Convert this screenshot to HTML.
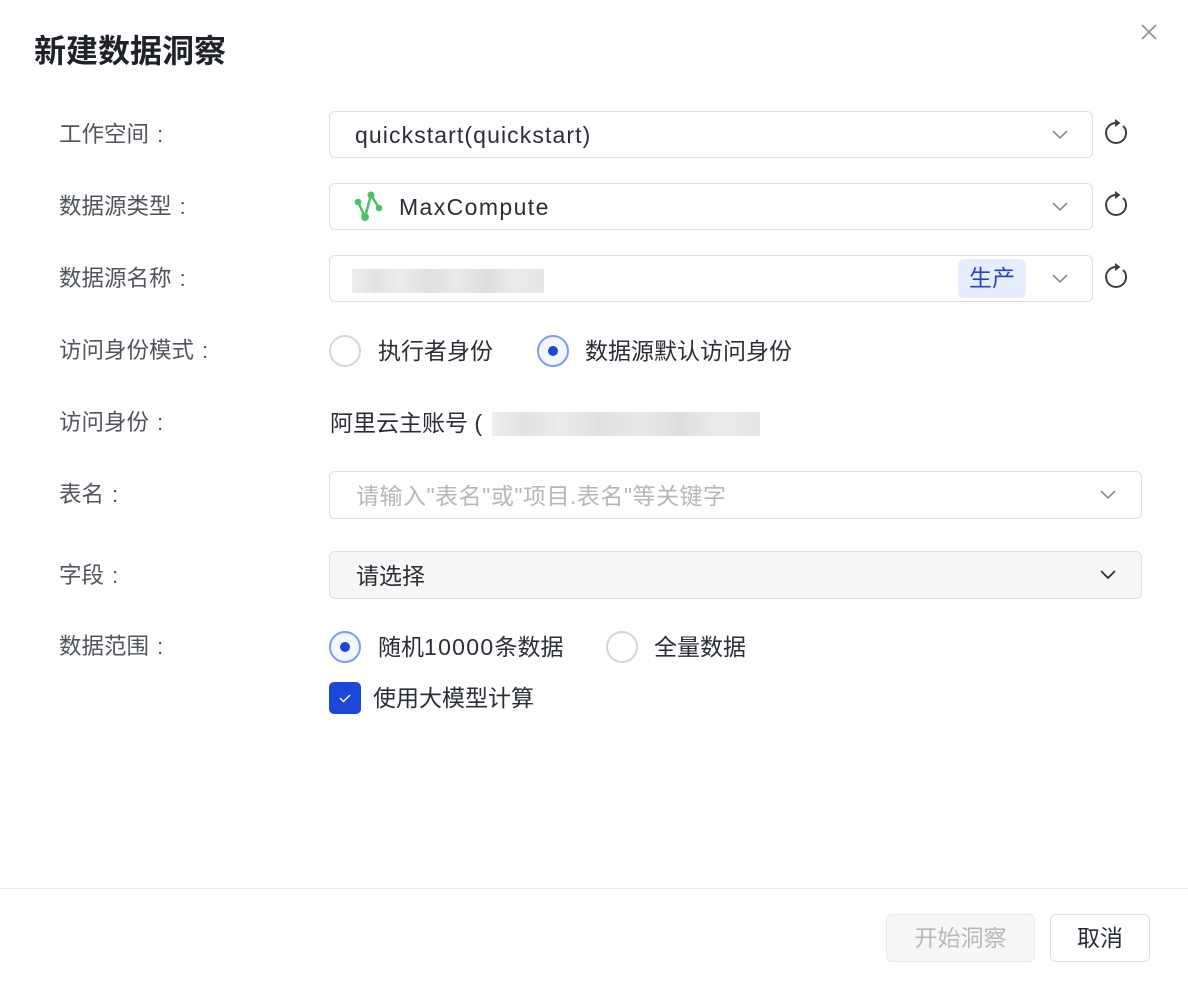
<!DOCTYPE html>
<html><head><meta charset="utf-8"><style>
*{box-sizing:border-box;margin:0;padding:0}
body{width:1188px;height:984px;background:#fff;font-family:"Liberation Sans","Noto Sans CJK SC",sans-serif;position:relative;overflow:hidden;color:#2a2e36}
.a{position:absolute;white-space:nowrap}
.title{left:34px;top:31px;font-size:32px;font-weight:bold;color:#1f2329;line-height:40px}
.lbl{left:59px;font-size:22.5px;color:#50555d;line-height:30px}
.lbl b{font-weight:normal;margin-left:8px}
.box{position:absolute;border:1px solid #dcdfe3;border-radius:6px;background:#fff}
.txt{font-size:23px;line-height:30px;color:#2a2e36}
.lat{letter-spacing:1.1px}
.radio{position:absolute;width:32px;height:32px;border-radius:50%;border:2px solid #d4d6da;background:#fff}
.radio.on{border-color:#7d9cf0;background:#f4f6fd}
.radio.on::after{content:"";position:absolute;left:9px;top:9px;width:10px;height:10px;border-radius:50%;background:#1a47d6}
.blur{position:absolute;height:24px;background:linear-gradient(90deg,#eee 0,#e2e2e2 12%,#ececec 25%,#e0e0e0 40%,#e9e9e9 55%,#dedede 70%,#ebebeb 85%,#e6e6e6 100%)}
</style></head><body>
<div class="a title">新建数据洞察</div>
<svg class="a" style="left:1140px;top:23px" width="18" height="18" viewBox="0 0 18 18"><path d="M2 2L16 16M16 2L2 16" stroke="#8a8e95" stroke-width="1.6"/></svg>

<div class="a lbl" style="top:120px">工作空间<b>:</b></div>
<div class="a lbl" style="top:192px">数据源类型<b>:</b></div>
<div class="a lbl" style="top:264px">数据源名称<b>:</b></div>
<div class="a lbl" style="top:336px">访问身份模式<b>:</b></div>
<div class="a lbl" style="top:408px">访问身份<b>:</b></div>
<div class="a lbl" style="top:480px">表名<b>:</b></div>
<div class="a lbl" style="top:561px">字段<b>:</b></div>
<div class="a lbl" style="top:632px">数据范围<b>:</b></div>

<div class="box" style="left:329px;top:111px;width:764px;height:47px"></div>
<div class="a txt lat" style="left:355px;top:120px">quickstart(quickstart)</div>
<div class="box" style="left:329px;top:183px;width:764px;height:47px"></div>
<svg class="a" style="left:350px;top:188px" width="36" height="36" viewBox="350 188 36 36"><path d="M358 202L365 217L371 195L379 208" stroke="#4cc06a" stroke-width="2.5" fill="none"/><circle cx="358" cy="202" r="3.3" fill="#4cc06a"/><circle cx="365" cy="217" r="4" fill="#4cc06a"/><circle cx="371" cy="195" r="3.5" fill="#4cc06a"/><circle cx="379" cy="208" r="3.3" fill="#4cc06a"/></svg>
<div class="a txt" style="left:399px;top:192px;letter-spacing:1.4px">MaxCompute</div>
<div class="box" style="left:329px;top:255px;width:764px;height:47px"></div>
<div class="blur" style="left:352px;top:269px;width:192px"></div>
<div class="a" style="left:958px;top:259px;width:68px;height:39px;background:#e6edfd;border-radius:6px;color:#2446b8;font-size:23px;line-height:39px;text-align:center">生产</div>

<svg class="a" style="left:1051px;top:129px" width="18" height="12"><path d="M2 2L9 9L16 2" stroke="#8a8e95" stroke-width="1.6" fill="none"/></svg>
<svg class="a" style="left:1051px;top:201px" width="18" height="12"><path d="M2 2L9 9L16 2" stroke="#8a8e95" stroke-width="1.6" fill="none"/></svg>
<svg class="a" style="left:1051px;top:273px" width="18" height="12"><path d="M2 2L9 9L16 2" stroke="#8a8e95" stroke-width="1.6" fill="none"/></svg>

<svg class="a" style="left:1102px;top:117px" width="28" height="30" viewBox="0 0 28 30"><path d="M21.1 8.9A10 10 0 1 1 14 6" stroke="#3b3f46" stroke-width="2" fill="none"/><path d="M13 2L18.5 6L13 10Z" fill="#3b3f46"/></svg>
<svg class="a" style="left:1102px;top:189px" width="28" height="30" viewBox="0 0 28 30"><path d="M21.1 8.9A10 10 0 1 1 14 6" stroke="#3b3f46" stroke-width="2" fill="none"/><path d="M13 2L18.5 6L13 10Z" fill="#3b3f46"/></svg>
<svg class="a" style="left:1102px;top:261px" width="28" height="30" viewBox="0 0 28 30"><path d="M21.1 8.9A10 10 0 1 1 14 6" stroke="#3b3f46" stroke-width="2" fill="none"/><path d="M13 2L18.5 6L13 10Z" fill="#3b3f46"/></svg>

<div class="radio" style="left:329px;top:335px"></div>
<div class="a txt" style="left:378px;top:336px">执行者身份</div>
<div class="radio on" style="left:537px;top:335px"></div>
<div class="a txt" style="left:585px;top:336px">数据源默认访问身份</div>

<div class="a txt" style="left:330px;top:408px">阿里云主账号 (</div>
<div class="blur" style="left:492px;top:412px;width:268px"></div>

<div class="box" style="left:329px;top:471px;width:813px;height:48px"></div>
<div class="a txt" style="left:356px;top:481px;color:#b4b7bc;letter-spacing:0.5px">请输入"表名"或"项目.表名"等关键字</div>
<svg class="a" style="left:1099px;top:489px" width="18" height="12"><path d="M2 2L9 9L16 2" stroke="#8a8e95" stroke-width="1.6" fill="none"/></svg>

<div class="box" style="left:329px;top:551px;width:813px;height:48px;background:#f7f7f8"></div>
<div class="a txt" style="left:356px;top:561px">请选择</div>
<svg class="a" style="left:1099px;top:569px" width="18" height="12"><path d="M2 2L9 9L16 2" stroke="#2a2e36" stroke-width="1.8" fill="none"/></svg>

<div class="radio on" style="left:329px;top:631px"></div>
<div class="a txt" style="left:378px;top:632px">随机<span style="letter-spacing:1.3px">10000</span>条数据</div>
<div class="radio" style="left:606px;top:631px"></div>
<div class="a txt" style="left:654px;top:632px">全量数据</div>

<div class="a" style="left:329px;top:682px;width:32px;height:32px;border-radius:5px;background:#1a47d6"><svg width="32" height="32"><path d="M11 16L14.5 19.5L21 13" stroke="#fff" stroke-width="1.4" fill="none"/></svg></div>
<div class="a txt" style="left:373px;top:683px">使用大模型计算</div>

<div class="a" style="left:0;top:888px;width:1188px;height:1px;background:#e8e9eb"></div>
<div class="a" style="left:886px;top:914px;width:149px;height:48px;border:1px solid #e8e9eb;border-radius:6px;background:#f7f7f8;color:#b6b8bc;font-size:23px;line-height:46px;text-align:center">开始洞察</div>
<div class="a" style="left:1050px;top:914px;width:100px;height:48px;border:1px solid #dcdfe3;border-radius:6px;background:#fff;color:#2a2e36;font-size:23px;line-height:46px;text-align:center">取消</div>
</body></html>
